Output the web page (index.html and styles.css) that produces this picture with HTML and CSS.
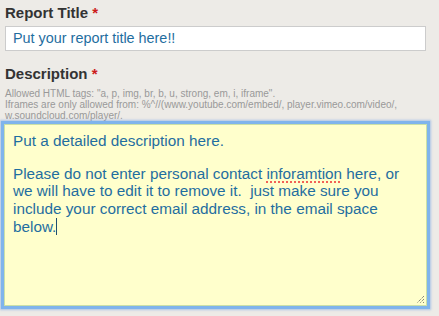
FILE: index.html
```html
<!DOCTYPE html>
<html>
<head>
<meta charset="utf-8">
<link rel="stylesheet" href="styles.css">
</head>
<body>
<div class="form">
  <div class="field">
    <label class="label">Report Title <span class="req">*</span></label>
    <div class="input">Put your report title here!!</div>
  </div>
  <div class="field desc">
    <label class="label">Description <span class="req">*</span></label>
    <div class="help">Allowed HTML tags: "a, p, img, br, b, u, strong, em, i, iframe".<br>Iframes are only allowed from: %^//(www.youtube.com/embed/, player.vimeo.com/video/,<br>w.soundcloud.com/player/.</div>
    <div class="textarea">
      <p>Put a detailed description here.</p>
      <p>Please do not enter personal contact <span class="typo">inforamtion</span> here, or we will have to edit it to remove it.&nbsp; just make sure you include your correct email address, in the email space below.<span class="caret"></span></p>
      <svg class="grip" width="10" height="10" viewBox="0 0 10 10"><path d="M9 2 L2 9 M9 5 L5 9 M9 8 L8 9" stroke="#555" stroke-width="1" stroke-dasharray="1 1"/></svg>
    </div>
  </div>
</div>
</body>
</html>
```
FILE: styles.css
```css
html, body {
  margin: 0;
  padding: 0;
  background: #edebe7;
}
body {
  font-family: "Liberation Sans", Arial, sans-serif;
  width: 439px;
  height: 316px;
  overflow: hidden;
}
.form {
  padding: 4px 13px 0 5px;
  display: flex;
  flex-direction: column;
}
.field {
  display: flex;
  flex-direction: column;
}
.label {
  font-weight: bold;
  font-size: 15px;
  color: #333;
  line-height: 18px;
}
.req {
  color: #cc1b1b;
}
.input {
  margin-top: 4px;
  height: 23px;
  border: 1px solid #ccc;
  background: #fff;
  color: #1f6ea0;
  font-size: 14.4px;
  line-height: 23px;
  padding-left: 7px;
}
.desc {
  margin-top: 14px;
}
.help {
  margin-top: 5px;
  font-size: 10px;
  line-height: 11px;
  color: #999;
}
.textarea {
  position: relative;
  margin: 3px -1px 0 -1px;
  height: 172px;
  border: 1px solid #c9e0a8;
  background: #ffffcc;
  box-shadow: 0 0 0 3px #7fb4ec, 0 0 2px 4px rgba(110,160,230,0.5);
  color: #1f6ea0;
  font-size: 15.3px;
  line-height: 17.7px;
  padding: 7px 20px 1px 8px;
}
.textarea p {
  margin: 0 0 15px 0;
}
.typo {
  text-decoration: underline dotted #e33;
  text-underline-offset: 3px;
}
.caret {
  display: inline-block;
  width: 1px;
  height: 17px;
  background: #1f4e70;
  vertical-align: top;
}
.grip {
  position: absolute;
  right: 1px;
  bottom: 1px;
}
```
